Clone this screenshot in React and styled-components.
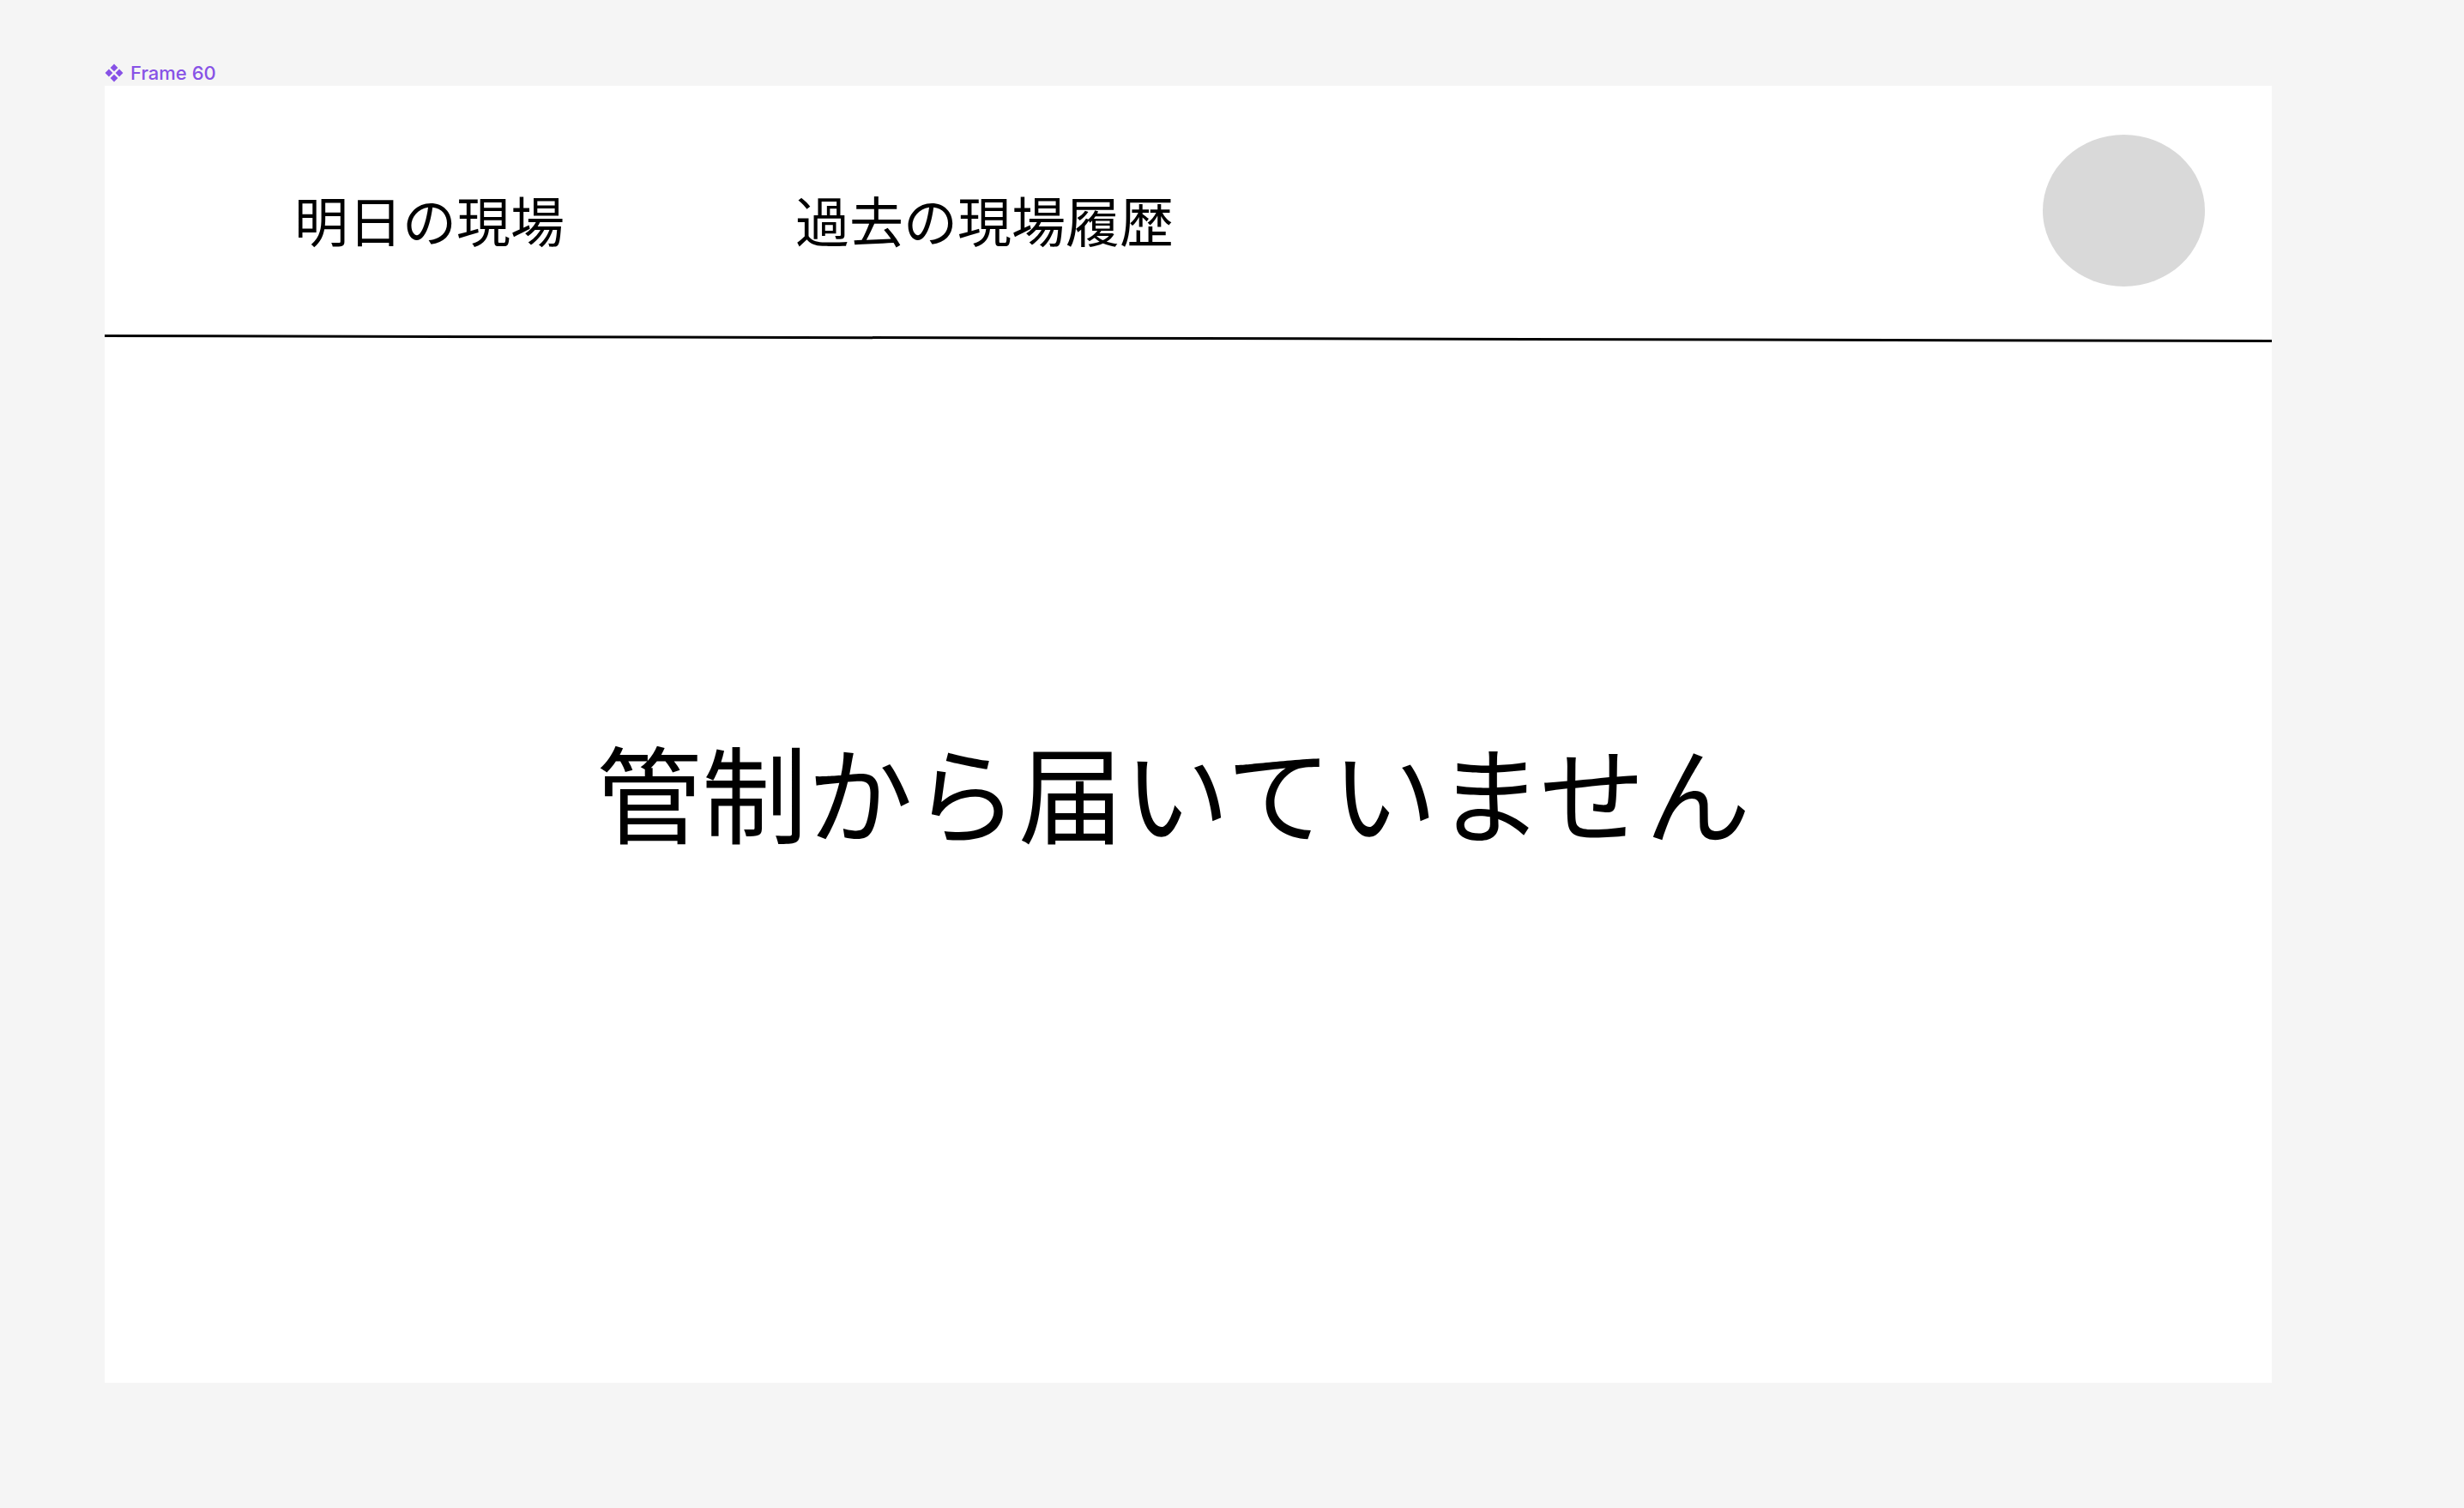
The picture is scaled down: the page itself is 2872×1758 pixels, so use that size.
import React from "react";
import styled, { createGlobalStyle } from "styled-components";

const GlobalStyle = createGlobalStyle`
  html, body {
    margin: 0;
    padding: 0;
    background: #f5f5f5;
  }
  body {
    font-family: "Noto Sans CJK JP", "Noto Sans", sans-serif;
    color: #000;
  }
`;

const ComponentIcon = () => (
  <svg width="22" height="22" viewBox="0 0 20 20">
    <path d="M10 0.5 L14 4.5 L10 8.5 L6 4.5 Z" fill="currentColor" />
    <path d="M10 11.5 L14 15.5 L10 19.5 L6 15.5 Z" fill="currentColor" />
    <path d="M4.5 6 L8.5 10 L4.5 14 L0.5 10 Z" fill="currentColor" />
    <path d="M15.5 6 L19.5 10 L15.5 14 L11.5 10 Z" fill="currentColor" />
  </svg>
);

const App = () => {
  return (
    <>
      <GlobalStyle />
      <Canvas>
        <FrameLabel>
          <ComponentIcon />
          <span>Frame 60</span>
        </FrameLabel>
        <Frame>
          <Header>
            <Nav>
              <NavItem>明日の現場</NavItem>
              <NavItem>過去の現場履歴</NavItem>
            </Nav>
            <Avatar />
          </Header>
          <Divider />
          <Body>
            <Message>管制から届いていません</Message>
          </Body>
        </Frame>
      </Canvas>
    </>
  );
};

export default App;

const Canvas = styled.div`
  width: 2872px;
  height: 1758px;
  box-sizing: border-box;
  padding: 70px 0 0 122px;
`;

const FrameLabel = styled.div`
  display: flex;
  align-items: center;
  gap: 8px;
  height: 30px;
  color: #8752e6;
  font-family: Inter, "Noto Sans", sans-serif;
  font-size: 22px;
  font-weight: 500;

  svg {
    flex-shrink: 0;
  }
`;

const Frame = styled.div`
  width: 2526px;
  height: 1512px;
  background: #fff;
  display: flex;
  flex-direction: column;
`;

const Header = styled.div`
  height: 290px;
  display: flex;
  align-items: center;
  justify-content: space-between;
  padding: 0 78px 0 221px;
  box-sizing: border-box;
`;

const Nav = styled.nav`
  display: flex;
  align-items: center;
  gap: 269px;
  padding-top: 18px;
`;

const NavItem = styled.div`
  font-size: 63px;
  line-height: 1;
  cursor: pointer;
`;

const Avatar = styled.div`
  width: 189px;
  height: 177px;
  border-radius: 50%;
  background: #d9d9d9;
`;

const Divider = styled.div`
  height: 3px;
  margin-top: 3px;
  background: #000;
  transform: rotate(0.136deg);
`;

const Body = styled.div`
  flex: 1;
  padding: 463px 0 0 573px;
`;

const Message = styled.div`
  font-size: 123px;
  line-height: 1;
`;
